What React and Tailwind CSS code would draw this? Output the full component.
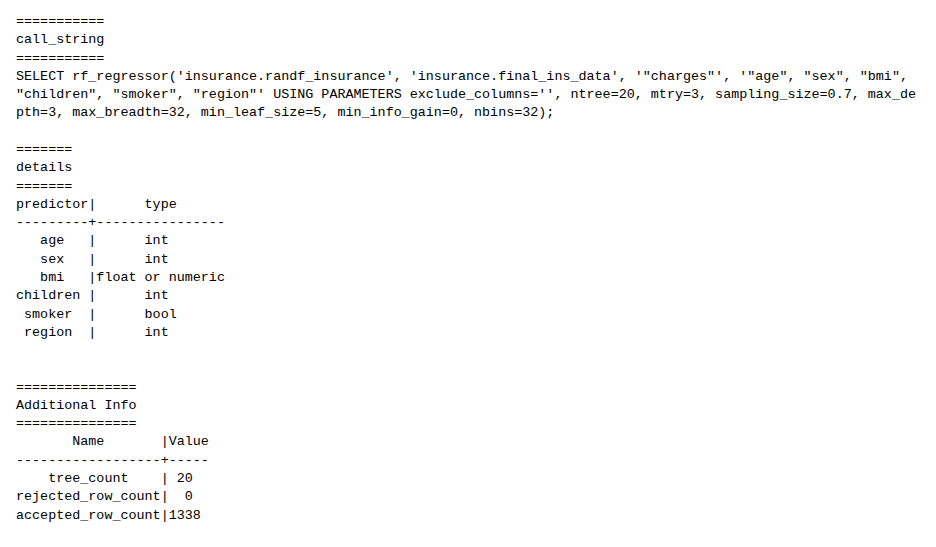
const lines = [
    '===========',
    'call_string',
    '===========',
    `SELECT rf_regressor('insurance.randf_insurance', 'insurance.final_ins_data', '"charges"', '"age", "sex", "bmi",`,
    `"children", "smoker", "region"' USING PARAMETERS exclude_columns='', ntree=20, mtry=3, sampling_size=0.7, max_de`,
    'pth=3, max_breadth=32, min_leaf_size=5, min_info_gain=0, nbins=32);',
    '',
    '=======',
    'details',
    '=======',
    'predictor|      type',
    '---------+----------------',
    '   age   |      int',
    '   sex   |      int',
    '   bmi   |float or numeric',
    'children |      int',
    ' smoker  |      bool',
    ' region  |      int',
    '',
    '',
    '===============',
    'Additional Info',
    '===============',
    '       Name       |Value',
    '------------------+-----',
    '    tree_count    | 20',
    'rejected_row_count|  0',
    'accepted_row_count|1338',
];

export default function App() {
    return (
        <div className="h-[547px] w-[936px] overflow-hidden bg-white">
            <pre className="whitespace-pre pl-[16px] pt-[13px] font-['Liberation_Mono','Courier_New',monospace] text-[13.4px] leading-[18.28px] text-black">
                {lines.join('\n')}
            </pre>
        </div>
    );
}
